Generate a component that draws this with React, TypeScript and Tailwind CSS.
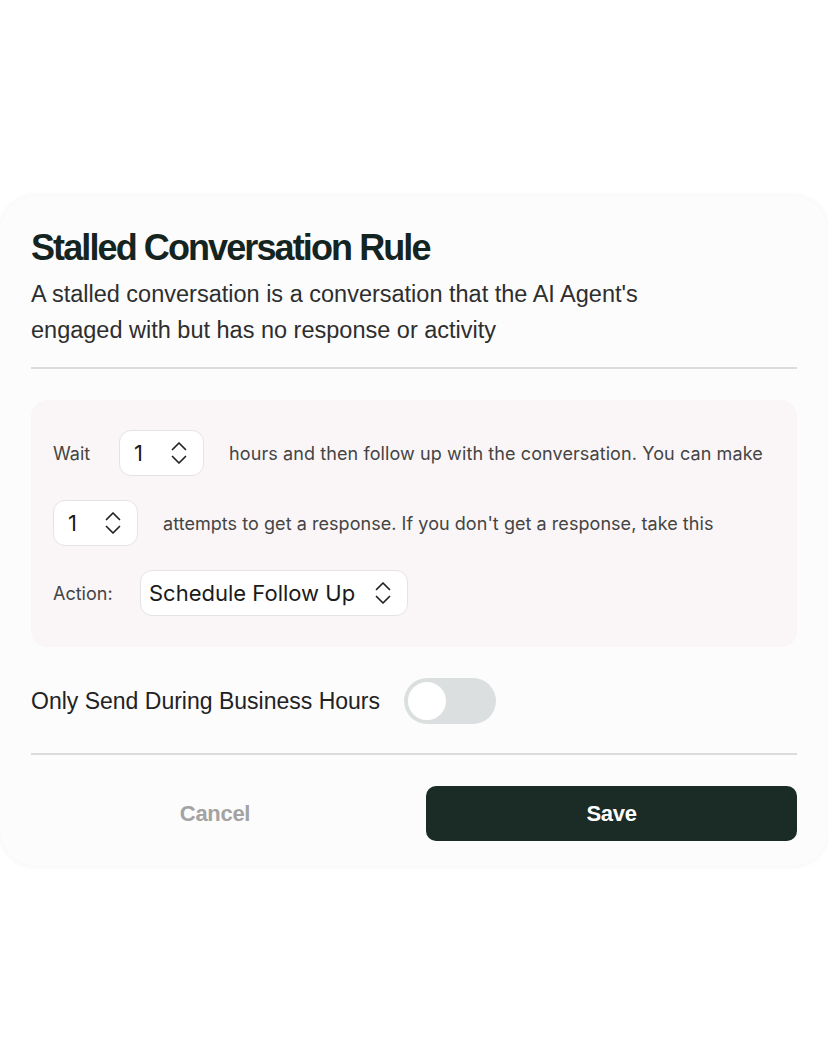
function UpDown() {
  return (
    <svg width="16" height="24" viewBox="0 0 16 24" fill="none" stroke="#222" strokeWidth="1.7" strokeLinecap="round" strokeLinejoin="round">
      <path d="M1.5 8.5 L8 2 L14.5 8.5" />
      <path d="M1.5 15.5 L8 22 L14.5 15.5" />
    </svg>
  )
}

function Stepper({ value }: { value: string }) {
  return (
    <div className="flex h-[46px] w-[85px] items-center justify-between rounded-[12px] border border-[#e6e3e4] bg-white pl-[14px] pr-[16px]">
      <span className="text-[22px] text-[#1a1a1a]">{value}</span>
      <UpDown />
    </div>
  )
}

export default function App() {
  return (
    <div className="flex min-h-[1064px] w-full flex-col bg-white pt-[196px]" style={{ fontFamily: '"Liberation Sans", Arial, sans-serif' }}>
      <div className="h-[670px] rounded-[36px] bg-[#fcfcfd] px-[31px] pt-[28px] shadow-[0_0_6px_rgba(0,0,0,0.06)]">
        {/* header */}
        <h1 className="text-[36px] font-bold leading-[48px] tracking-[-1.9px] text-[#142420]">
          Stalled Conversation Rule
        </h1>
        <p className="mt-[4px] w-[660px] text-[23.5px] leading-[36px] text-[#2e2e2e]">
          A stalled conversation is a conversation that the AI Agent's engaged with but has no response or activity
        </p>
        <div className="mt-[19px] h-[2px] bg-[#dcdcdc]" />

        {/* rule panel */}
        <div
          className="mt-[31px] flex h-[247px] flex-col gap-[24px] rounded-[16px] bg-[#faf6f7] pl-[22px] pt-[30px] text-[#444]"
          style={{ fontFamily: 'Inter, sans-serif' }}
        >
          <div className="flex items-center">
            <span className="w-[66px] text-[18px]">Wait</span>
            <Stepper value="1" />
            <span className="ml-[25px] text-[18px] tracking-[0.1px]">hours and then follow up with the conversation. You can make</span>
          </div>
          <div className="flex items-center">
            <Stepper value="1" />
            <span className="ml-[25px] text-[18px] tracking-[0.05px]">attempts to get a response. If you don't get a response, take this</span>
          </div>
          <div className="flex items-center">
            <span className="w-[87px] text-[18px]">Action:</span>
            <div className="flex h-[46px] w-[268px] items-center justify-between rounded-[12px] border border-[#e6e3e4] bg-white pl-[8px] pr-[16px]">
              <span className="text-[22px] text-[#1a1a1a]">Schedule Follow Up</span>
              <UpDown />
            </div>
          </div>
        </div>

        {/* business hours */}
        <div className="mt-[31px] flex items-center gap-[24px]">
          <span className="text-[23px] text-[#222]">Only Send During Business Hours</span>
          <div className="flex h-[46px] w-[92px] items-center rounded-full bg-[#dcdfdf] pl-[2px]">
            <div className="h-[42px] w-[42px] rounded-full border-[2px] border-[#dcdfdf] bg-white" />
          </div>
        </div>
        <div className="mt-[29px] h-[2px] bg-[#dcdcdc]" />

        {/* actions */}
        <div className="mt-[31px] flex items-center justify-between">
          <button className="w-[368px] text-center text-[22px] font-bold tracking-[-0.3px] text-[#a3a3a3]">Cancel</button>
          <button className="h-[55px] w-[371px] rounded-[10px] bg-[#1b2c27] text-[22px] font-bold tracking-[-0.3px] text-white">Save</button>
        </div>
      </div>
    </div>
  )
}
